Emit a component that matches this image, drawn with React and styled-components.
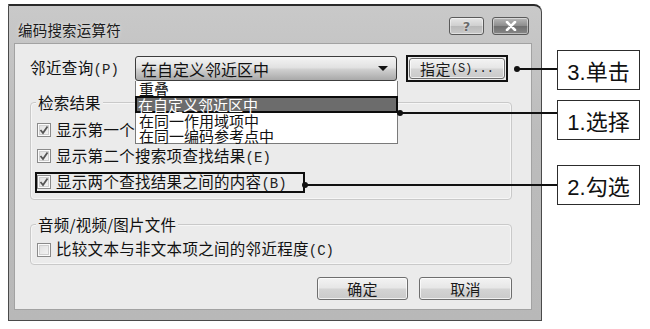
import React from "react";
import styled, { createGlobalStyle } from "styled-components";

const GlobalStyle = createGlobalStyle`
  html, body {
    margin: 0;
    padding: 0;
    background: #ffffff;
  }
  body {
    font-family: "Noto Sans CJK SC", "Liberation Sans", sans-serif;
    color: #111;
  }
`;

const Stage = styled.div`
  position: relative;
  width: 650px;
  height: 329px;
  overflow: hidden;
  background: #fff;
`;

const Dialog = styled.div`
  margin: 4px 0 0 8px;
  width: 534px;
  height: 317px;
  box-sizing: border-box;
  border: 1px solid #4a4a4a;
  border-top: 2px solid #2a2a2a;
  border-radius: 0 8px 0 0;
  background: linear-gradient(180deg, #c9c9c9 0%, #bcbcbc 40%, #b8b8b8 100%);
  display: flex;
  flex-direction: column;
`;

const TitleBar = styled.div`
  height: 37px;
  display: flex;
  align-items: flex-start;
  justify-content: space-between;
  padding: 0 12px 0 9px;
  box-sizing: border-box;
`;

const Title = styled.div`
  margin-top: 15px;
  font-size: 14.5px;
  line-height: 18px;
  color: #1c1c1c;
  letter-spacing: 0.2px;
  text-shadow: 0 0 4px rgba(255, 255, 255, 0.6);
`;

const TitleButtons = styled.div`
  display: flex;
  gap: 8px;
  margin-top: 11px;
`;

const TitleButton = styled.div`
  width: ${({ $wide }) => ($wide ? 37 : 35)}px;
  height: 18px;
  box-sizing: border-box;
  border: 1px solid #5a5a5a;
  border-radius: 3px;
  display: flex;
  align-items: center;
  justify-content: center;
  background: ${({ $dark }) =>
    $dark
      ? "linear-gradient(180deg, #b8b8b8 0%, #8c8c8c 50%, #6f6f6f 51%, #888 100%)"
      : "linear-gradient(180deg, #e6e6e6 0%, #cfcfcf 50%, #b9b9b9 51%, #c9c9c9 100%)"};
  box-shadow: inset 0 0 0 1px rgba(255, 255, 255, 0.45);
  font-family: "DejaVu Sans", sans-serif;
  font-weight: bold;
  font-size: 13px;
  color: #6a6a6a;
  text-shadow: 0 0 2px #fff;
`;

const Client = styled.div`
  flex: 1;
  margin: 0 9px 10px 5px;
  background: #ebebeb;
  border: 1px solid #a2a2a2;
  display: flex;
  flex-direction: column;
  font-size: 15.5px;
  line-height: 16px;
`;

const QueryRow = styled.div`
  margin-top: 11px;
  height: 27px;
  display: flex;
  align-items: center;
  padding-left: 15px;
`;

const FieldLabel = styled.div`
  width: 105px;
  letter-spacing: 0.4px;
`;

const ComboWrap = styled.div`
  position: relative;
  width: 262px;
  height: 25px;
  z-index: 2;
`;

const Combo = styled.div`
  height: 25px;
  box-sizing: border-box;
  border: 1px solid #3c3c3c;
  border-radius: 3px;
  background: linear-gradient(180deg, #f4f4f4 0%, #e2e2e2 45%, #cfcfcf 55%, #a9a9a9 100%);
  display: flex;
  align-items: center;
  justify-content: space-between;
  padding: 0 8px 0 5px;
  font-size: 16px;
  color: #111;
`;

const Arrow = styled.span`
  width: 0;
  height: 0;
  border-left: 5px solid transparent;
  border-right: 5px solid transparent;
  border-top: 5px solid #111;
`;

const Menu = styled.div`
  position: absolute;
  top: 100%;
  left: 0;
  width: 263px;
  box-sizing: border-box;
  background: #fff;
  border: 1px solid #7a7a7a;
  border-top: none;
  font-size: 15px;
  line-height: 15px;
`;

const MenuItem = styled.div`
  height: ${({ $active }) => ($active ? 17 : 15)}px;
  box-sizing: border-box;
  padding-left: ${({ $active }) => ($active ? 1 : 3)}px;
  white-space: nowrap;
  color: ${({ $active }) => ($active ? "#fff" : "#111")};
  background: ${({ $active }) => ($active ? "#6c6c6c" : "transparent")};
  border: ${({ $active }) => ($active ? "2px solid #0c0c0c" : "none")};
  margin: ${({ $active }) => ($active ? "0 -1px" : "0")};
  line-height: ${({ $active }) => ($active ? 13 : 15)}px;
`;

const Marked = styled.div`
  margin-left: 9px;
  border: 2px solid #111;
  padding: 1px;
  display: flex;
`;

const Button = styled.div`
  width: ${({ $w }) => $w}px;
  height: ${({ $h }) => $h || 23}px;
  box-sizing: border-box;
  border: 1px solid #6e6e6e;
  border-radius: 3px;
  background: linear-gradient(180deg, #f3f3f3 0%, #e6e6e6 48%, #d4d4d4 52%, #cacaca 100%);
  box-shadow: inset 0 0 0 1px rgba(255, 255, 255, 0.7);
  display: flex;
  align-items: center;
  justify-content: center;
  font-size: 15px;
  color: #1a1a1a;
  letter-spacing: 0.3px;
`;

const GroupBox = styled.div`
  margin: ${({ $top }) => $top}px 0 0 15px;
  width: 482px;
  box-sizing: border-box;
  border: 1px solid #c9c9c9;
  border-radius: 4px;
  padding: 0 0 ${({ $pb }) => $pb}px 6px;
  box-shadow: inset 0 0 0 1px #f6f6f6;
`;

const Legend = styled.div`
  margin: -9px 0 0 -1px;
  padding: 0 2px;
  width: fit-content;
  background: #ebebeb;
  line-height: 16px;
  letter-spacing: 0.2px;
`;

const Rows = styled.div`
  padding-top: ${({ $pt }) => $pt}px;
  display: flex;
  flex-direction: column;
`;

const CheckRow = styled.div`
  height: ${({ $h }) => $h}px;
  display: flex;
  align-items: center;
`;

const CheckLabel = styled.div`
  display: flex;
  align-items: center;
  gap: 5px;
  height: 21px;
  box-sizing: border-box;
  white-space: nowrap;
  letter-spacing: 0.3px;
  margin-left: ${({ $marked }) => ($marked ? -2 : 0)}px;
  padding-right: ${({ $marked }) => ($marked ? 16 : 0)}px;
  border: ${({ $marked }) => ($marked ? "2px solid #0e0e0e" : "none")};
`;

const Box = styled.span`
  width: 14px;
  height: 14px;
  box-sizing: border-box;
  border: 1px solid #8a8a8a;
  background: linear-gradient(135deg, #dedede 0%, #f6f6f6 100%);
  box-shadow: inset 0 0 0 1px #fbfbfb, inset 0 0 0 2px #cfcfcf;
  display: flex;
  align-items: center;
  justify-content: center;
  flex: none;
`;

const Mnemonic = styled.span`
  font-family: "Liberation Mono", "DejaVu Sans Mono", monospace;
  font-size: ${({ $size }) => $size || 14}px;
  letter-spacing: 0;
  color: #222;
`;

const Actions = styled.div`
  margin-top: 12px;
  display: flex;
  justify-content: flex-end;
  gap: 11px;
  padding-right: 19px;
`;

const Callout = styled.div`
  position: absolute;
  left: 557px;
  top: ${({ $top }) => $top}px;
  width: 83px;
  height: 40px;
  box-sizing: border-box;
  border: 1px solid #2c2c2c;
  background: #fff;
  display: flex;
  align-items: center;
  justify-content: center;
  font-family: "Liberation Sans", "Noto Sans CJK SC", sans-serif;
  font-size: 22px;
  color: #111;
  z-index: 5;
`;

const Leader = styled.div`
  position: absolute;
  left: ${({ $x }) => $x}px;
  top: ${({ $y }) => $y - 1}px;
  width: ${({ $w }) => $w}px;
  height: 2px;
  background: #111;
  z-index: 4;
`;

const Dot = styled.div`
  position: absolute;
  left: ${({ $x }) => $x - 3}px;
  top: ${({ $y }) => $y - 3}px;
  width: 6px;
  height: 6px;
  border-radius: 50%;
  background: #111;
  z-index: 4;
`;

const Check = ({ on }) => (
  <Box>
    {on && (
      <svg width="10" height="10" viewBox="0 0 10 10">
        <path d="M1.5 5 L4 8 L8.5 1.5" fill="none" stroke="#555" strokeWidth="1.8" />
      </svg>
    )}
  </Box>
);

const callouts = [
  { text: "3.单击", top: 50, y: 69, from: 517 },
  { text: "1.选择", top: 100, y: 113, from: 400 },
  { text: "2.勾选", top: 165, y: 185, from: 305 },
];

export default function App() {
  return (
    <Stage>
      <GlobalStyle />
      <Dialog>
        <TitleBar>
          <Title>编码搜索运算符</Title>
          <TitleButtons>
            <TitleButton>?</TitleButton>
            <TitleButton $dark $wide>
              <svg width="14" height="10" viewBox="0 0 14 10">
                <path d="M3 1 L11 9 M11 1 L3 9" stroke="#fff" strokeWidth="2.6" strokeLinecap="round" />
              </svg>
            </TitleButton>
          </TitleButtons>
        </TitleBar>
        <Client>
          <QueryRow>
            <FieldLabel>
              邻近查询<Mnemonic>(P)</Mnemonic>
            </FieldLabel>
            <ComboWrap>
              <Combo>
                <span>在自定义邻近区中</span>
                <Arrow />
              </Combo>
              <Menu>
                <MenuItem>重叠</MenuItem>
                <MenuItem $active>在自定义邻近区中</MenuItem>
                <MenuItem>在同一作用域项中</MenuItem>
                <MenuItem>在同一编码参考点中</MenuItem>
              </Menu>
            </ComboWrap>
            <Marked>
              <Button $w={96} $h={21}>
                指定<Mnemonic $size={12}>(S)...</Mnemonic>
              </Button>
            </Marked>
          </QueryRow>

          <GroupBox $top={20} $pb={4}>
            <Legend>检索结果</Legend>
            <Rows $pt={7}>
              <CheckRow $h={26}>
                <CheckLabel>
                  <Check on />
                  <span>
                    显示第一个搜索项查找结果<Mnemonic>(F)</Mnemonic>
                  </span>
                </CheckLabel>
              </CheckRow>
              <CheckRow $h={26}>
                <CheckLabel>
                  <Check on />
                  <span>
                    显示第二个搜索项查找结果<Mnemonic>(E)</Mnemonic>
                  </span>
                </CheckLabel>
              </CheckRow>
              <CheckRow $h={26}>
                <CheckLabel $marked>
                  <Check on />
                  <span>
                    显示两个查找结果之间的内容<Mnemonic>(B)</Mnemonic>
                  </span>
                </CheckLabel>
              </CheckRow>
            </Rows>
          </GroupBox>

          <GroupBox $top={24} $pb={2}>
            <Legend>音频/视频/图片文件</Legend>
            <Rows $pt={5}>
              <CheckRow $h={25}>
                <CheckLabel>
                  <Check />
                  <span>
                    比较文本与非文本项之间的邻近程度<Mnemonic>(C)</Mnemonic>
                  </span>
                </CheckLabel>
              </CheckRow>
            </Rows>
          </GroupBox>

          <Actions>
            <Button $w={91}>确定</Button>
            <Button $w={93}>取消</Button>
          </Actions>
        </Client>
      </Dialog>

      {callouts.map((c) => (
        <React.Fragment key={c.text}>
          <Dot $x={c.from} $y={c.y} />
          <Leader $x={c.from} $y={c.y} $w={557 - c.from} />
          <Callout $top={c.top}>{c.text}</Callout>
        </React.Fragment>
      ))}
    </Stage>
  );
}
